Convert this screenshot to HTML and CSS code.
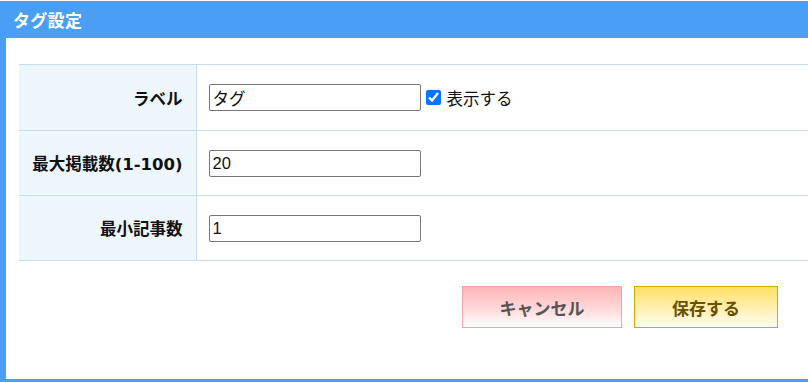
FILE: index.html
```html
<!DOCTYPE html>
<html lang="ja">
<head>
<meta charset="utf-8">
<title>タグ設定</title>
<link rel="stylesheet" href="styles.css">
</head>
<body>
<div class="dialog">
  <div class="dialog-header">タグ設定</div>
  <div class="dialog-body">
    <table class="settings">
      <tr class="row-first">
        <th>ラベル</th>
        <td>
          <div class="field-line">
            <input class="text-input" type="text" value="タグ">
            <label class="check-label"><input class="check" type="checkbox" checked><span>表示する</span></label>
          </div>
        </td>
      </tr>
      <tr>
        <th>最大掲載数(1-100)</th>
        <td><input class="text-input" type="text" value="20"></td>
      </tr>
      <tr>
        <th>最小記事数</th>
        <td><input class="text-input" type="text" value="1"></td>
      </tr>
    </table>
    <div class="actions">
      <button class="btn btn-cancel" type="button">キャンセル</button>
      <button class="btn btn-save" type="button">保存する</button>
    </div>
  </div>
</div>
</body>
</html>
```

FILE: styles.css
```css
html, body {
  margin: 0;
  padding: 0;
  background: #ffffff;
  overflow: hidden;
}

body {
  font-family: "DejaVu Sans", "Noto Sans CJK JP", sans-serif;
  color: #111111;
}

.dialog {
  margin-top: 1px;
  width: 836px;
  height: 384px;
  background: #4a9ff5;
  padding: 0 6px 6px 6px;
  box-sizing: border-box;
  display: flex;
  flex-direction: column;
}

.dialog-header {
  height: 37px;
  flex: none;
  display: flex;
  align-items: center;
  padding-left: 7px;
  color: #ffffff;
  font-family: "Noto Sans CJK JP", sans-serif;
  font-weight: bold;
  font-size: 17px;
  letter-spacing: 0.3px;
}

.dialog-body {
  flex: 1;
  background: #ffffff;
  padding: 26px 13px 0 13px;
}

.settings {
  width: 100%;
  border-collapse: collapse;
}

.settings th,
.settings td {
  border-top: 1px solid #c8dcee;
  border-bottom: 1px solid #c8dcee;
  height: 65px;
  padding: 0;
  box-sizing: border-box;
}

.settings .row-first th,
.settings .row-first td {
  height: 66px;
}

.settings th {
  width: 177px;
  background: #eef6fd;
  border-right: 1px solid #c8dcee;
  text-align: right;
  padding-right: 13px;
  font-size: 16.5px;
  font-weight: bold;
  color: #111111;
  white-space: nowrap;
}

.settings td {
  padding-left: 12px;
  text-align: left;
}

.field-line {
  display: flex;
  align-items: center;
}

.text-input {
  width: 212px;
  height: 27px;
  box-sizing: border-box;
  border: 1px solid #767676;
  border-radius: 2px;
  padding: 0 3px;
  font-family: "Liberation Sans", "Noto Sans CJK JP", sans-serif;
  font-size: 16.5px;
  color: #111111;
  background: #ffffff;
  display: block;
}

.check-label {
  display: flex;
  align-items: center;
  gap: 6px;
  margin-left: 5px;
  font-family: "Noto Sans CJK JP", sans-serif;
  font-size: 16.5px;
  color: #111111;
}

.check {
  width: 15px;
  height: 15px;
  margin: 0;
  accent-color: #0075ff;
}

.actions {
  display: flex;
  justify-content: flex-end;
  gap: 12px;
  padding-top: 25px;
  padding-right: 39px;
}

.btn {
  height: 42px;
  box-sizing: border-box;
  font-family: "Noto Sans CJK JP", sans-serif;
  font-weight: bold;
  font-size: 17px;
  border-radius: 0;
  cursor: pointer;
}

.btn-cancel {
  width: 160px;
  border: 1px solid #f4a3a6;
  background: linear-gradient(to bottom, #ffb5b7 0%, #ffd9da 55%, #ffffff 100%);
  color: #555555;
}

.btn-save {
  width: 144px;
  border: 1px solid #d6a900;
  background: linear-gradient(to bottom, #ffdf66 0%, #fff0b3 55%, #fffdf5 100%);
  color: #6a5000;
}
```
